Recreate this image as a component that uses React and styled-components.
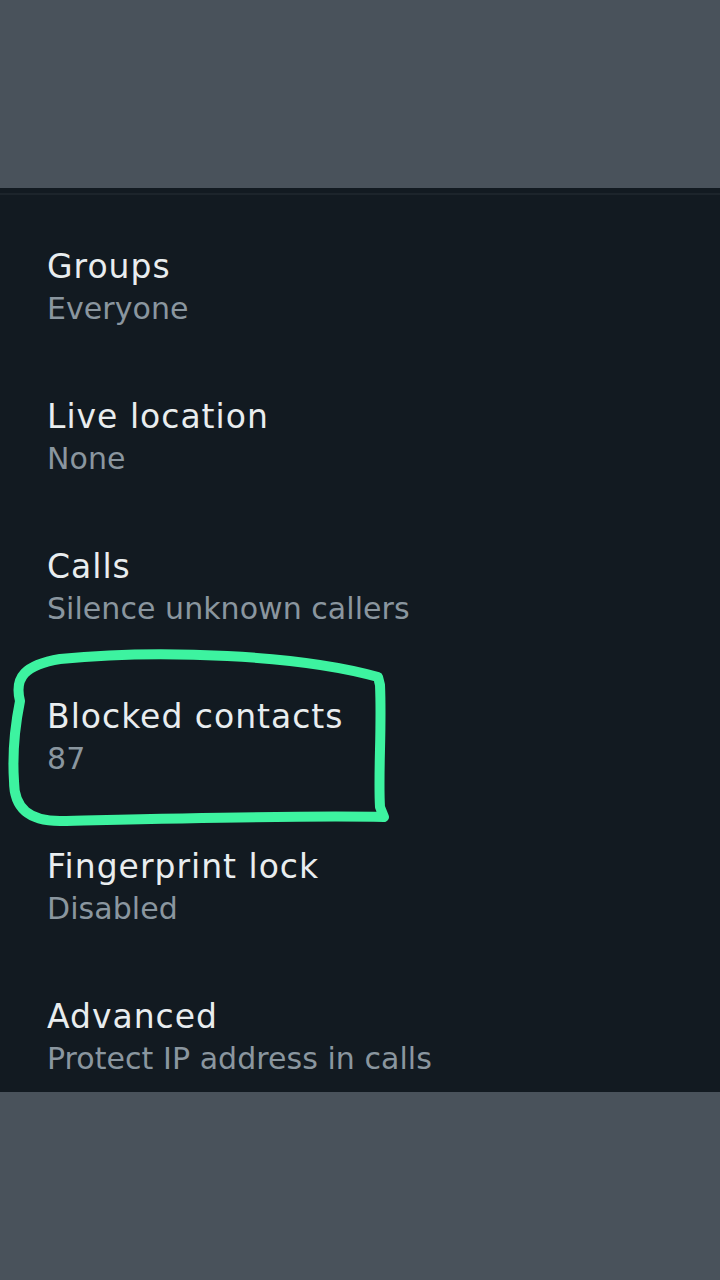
import React from 'react';
import styled, { createGlobalStyle } from 'styled-components';

const GlobalStyle = createGlobalStyle`
  html, body {
    margin: 0;
    padding: 0;
    background: #49525b;
  }
  body {
    font-family: "DejaVu Sans", "Noto Sans", sans-serif;
  }
`;

const settings = [
  { title: 'Groups', value: 'Everyone' },
  { title: 'Live location', value: 'None' },
  { title: 'Calls', value: 'Silence unknown callers' },
  { title: 'Blocked contacts', value: '87', marked: true },
  { title: 'Fingerprint lock', value: 'Disabled' },
  { title: 'Advanced', value: 'Protect IP address in calls' },
];

const App = () => {
  return (
    <Screen>
      <GlobalStyle />
      <Band />
      <Panel>
        {settings.map(item => (
          <Row key={item.title}>
            <Title>{item.title}</Title>
            <Value>{item.value}</Value>
            {item.marked && <Scribble />}
          </Row>
        ))}
      </Panel>
      <Band />
    </Screen>
  );
};

// hand drawn green loop around the blocked contacts row
const Scribble = () => (
  <Marker viewBox="0 0 400 200" width="400" height="200">
    <path
      d="M 20 60 C 14 36, 25 24, 60 18 C 160 8, 300 14, 378 36 L 380 44 C 382 90, 378 130, 380 166 L 384 176 C 300 174, 150 178, 60 180 C 30 180, 14 168, 14 140 C 12 110, 16 80, 20 60 Z"
      fill="none"
      stroke="#3df3a0"
      strokeWidth="10"
      strokeLinejoin="round"
      strokeLinecap="round"
    />
  </Marker>
);

export default App;

const Screen = styled.div`
  display: flex;
  flex-direction: column;
  width: 720px;
  height: 1280px;
`;

const Band = styled.div`
  height: 188px;
  flex-shrink: 0;
  background: #49525b;
`;

const Panel = styled.div`
  flex: 1;
  display: flex;
  flex-direction: column;
  gap: 68px;
  padding: 59px 0 11px 47px;
  background: linear-gradient(#121a21 0 5px, #1c242b 5px 7px, #121a21 7px);
`;

const Row = styled.div`
  position: relative;
  display: flex;
  flex-direction: column;
`;

const Title = styled.div`
  font-size: 33px;
  line-height: 40px;
  letter-spacing: 1px;
  color: #e9edef;
`;

const Value = styled.div`
  margin-top: 2px;
  font-size: 30px;
  line-height: 40px;
  letter-spacing: 0.05px;
  color: #8a969f;
`;

const Marker = styled.svg`
  position: absolute;
  left: -47px;
  top: -56px;
  pointer-events: none;
`;
